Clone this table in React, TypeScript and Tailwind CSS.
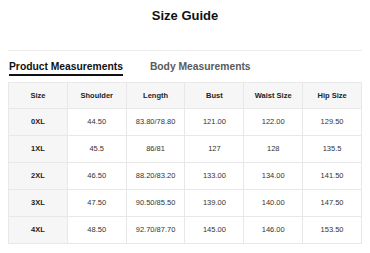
import React from "react";

const headers = ["Size", "Shoulder", "Length", "Bust", "Waist Size", "Hip Size"];

const rows = [
  ["0XL", "44.50", "83.80/78.80", "121.00", "122.00", "129.50"],
  ["1XL", "45.5", "86/81", "127", "128", "135.5"],
  ["2XL", "46.50", "88.20/83.20", "133.00", "134.00", "141.50"],
  ["3XL", "47.50", "90.50/85.50", "139.00", "140.00", "147.50"],
  ["4XL", "48.50", "92.70/87.70", "145.00", "146.00", "153.50"],
];

const App = () => {
  return (
    <div className="bg-white min-h-screen px-[8px] text-[#222]" style={{ fontFamily: '"Liberation Sans", Arial, sans-serif' }}>
      {/* Title */}
      <div className="h-[30px] flex items-center justify-center">
        <h1 className="text-[13px] font-bold text-[#111] leading-none">Size Guide</h1>
      </div>

      {/* Tabs */}
      <div className="mt-[20px] border-t border-[#ececec] flex gap-[27px] pt-[9px] px-[1px]">
        <div className="text-[10.3px] leading-[14px] font-bold text-[#111] border-b-2 border-[#111]">
          Product Measurements
        </div>
        <div className="text-[10.3px] leading-[14px] font-bold text-[#5a5a5a]">Body Measurements</div>
      </div>

      {/* Table */}
      <table className="mt-[6px] w-[354px] table-fixed border-collapse border border-[#e8e8e8]">
        <thead>
          <tr className="h-[26px] bg-[#f6f6f6]">
            {headers.map((h) => (
              <th key={h} className="border border-[#e8e8e8] text-[7.5px] font-bold text-[#222] text-center">
                {h}
              </th>
            ))}
          </tr>
        </thead>
        <tbody>
          {rows.map((r) => (
            <tr key={r[0]} className="h-[27px]">
              {r.map((c, i) => (
                <td
                  key={i}
                  className={
                    i === 0
                      ? "border border-[#e8e8e8] bg-[#f6f6f6] text-[7.5px] font-bold text-[#222] text-center"
                      : "border border-[#e8e8e8] text-[7.5px] text-[#333] text-center"
                  }
                >
                  {c}
                </td>
              ))}
            </tr>
          ))}
        </tbody>
      </table>
    </div>
  );
};

export default App;
